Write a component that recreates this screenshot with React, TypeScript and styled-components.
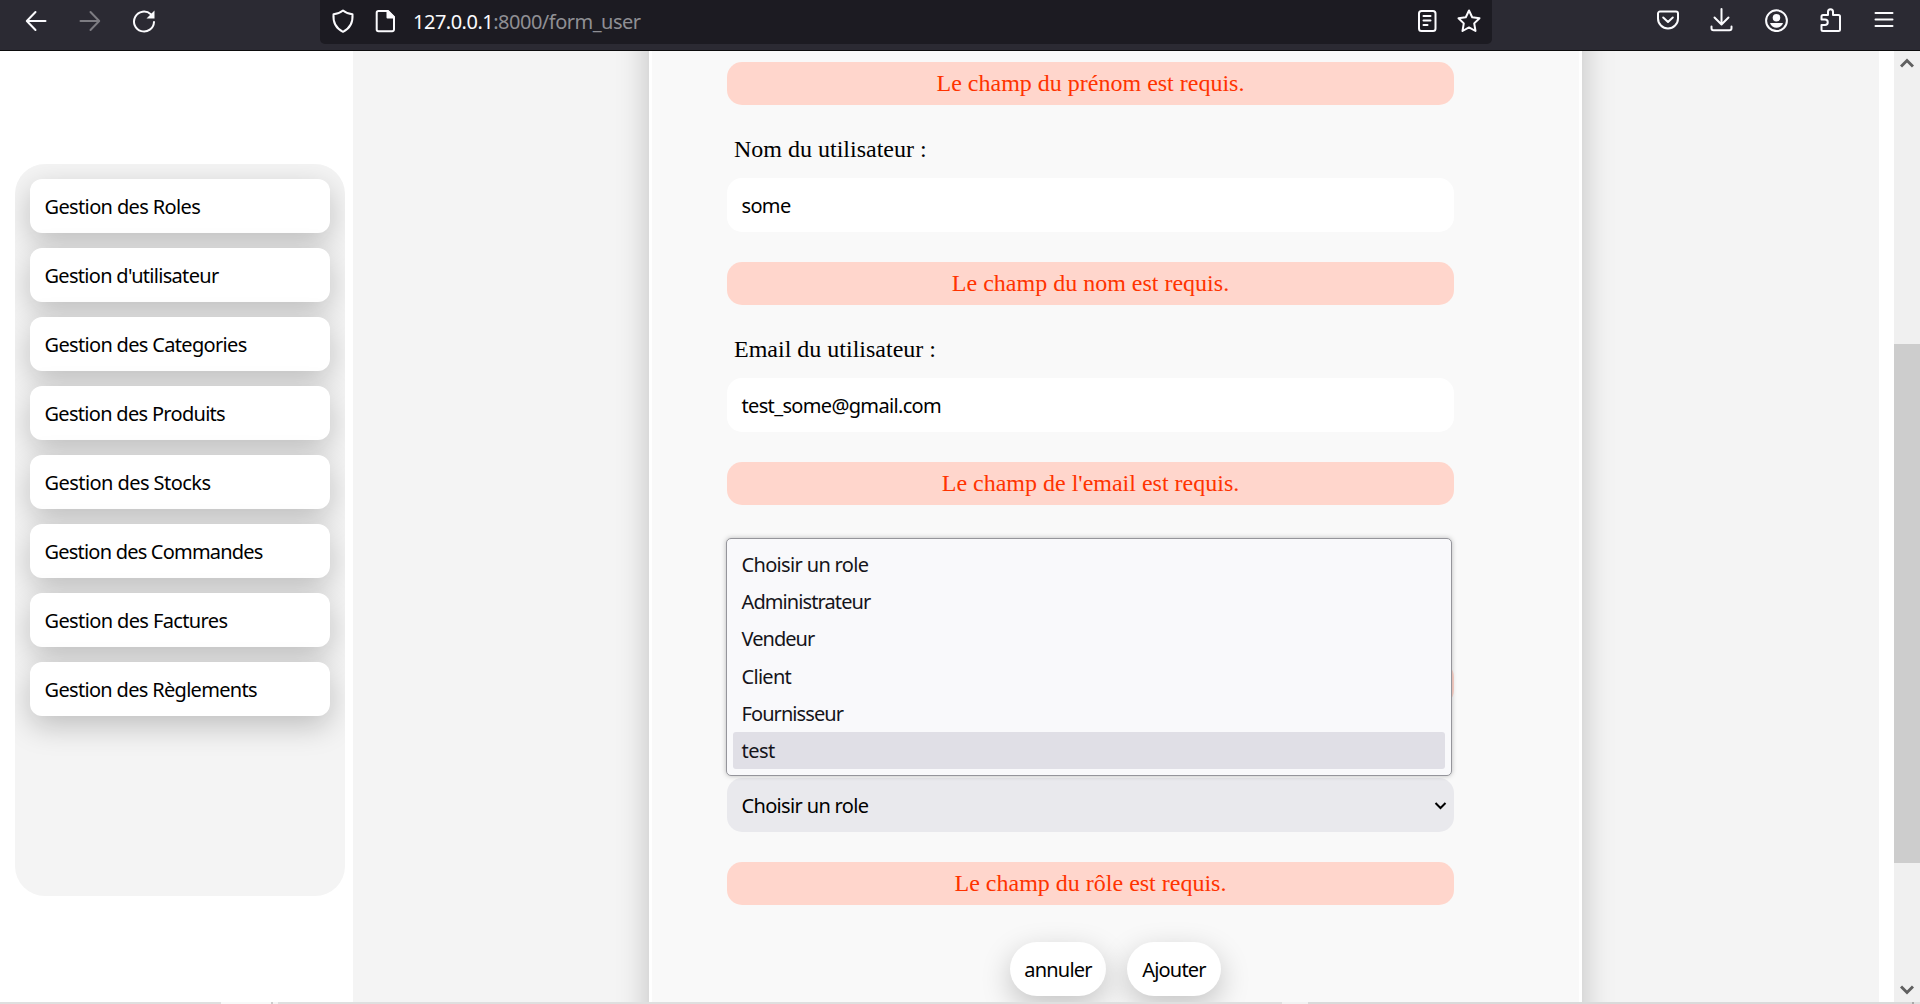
import React from "react";
import styled, { createGlobalStyle } from "styled-components";

const Global = createGlobalStyle`
  * { box-sizing: border-box; }
  html, body { margin: 0; padding: 0; }
  body { overflow: hidden; background: #fff; }
`;

const uiFont = `"Noto Sans", "Open Sans", sans-serif`;
const softShadow = `0 10px 30px rgba(0, 0, 0, 0.22)`;

const Window = styled.div`
  width: 1920px;
  height: 1004px;
  display: flex;
  flex-direction: column;
  overflow: hidden;
  font-family: ${uiFont};
  color: #000;
`;

const Toolbar = styled.header`
  height: 51px;
  flex: none;
  display: flex;
  align-items: flex-start;
  background: #2b2a33;
  border-bottom: 1px solid #0c0c0d;
`;

const NavButtons = styled.nav`
  width: 320px;
  height: 42px;
  padding-left: 24px;
  display: flex;
  align-items: center;
  gap: 30px;
`;

const AddressBar = styled.div`
  width: 1172px;
  height: 44px;
  padding: 0 11px 3px 10px;
  display: flex;
  align-items: center;
  background: #1c1b22;
  border-radius: 0 0 5px 5px;
`;

const Address = styled.span`
  flex: 1;
  margin-left: 16px;
  padding-top: 2px;
  font-size: 20px;
  letter-spacing: -0.5px;
  line-height: 40px;
  color: #8f8f94;
  white-space: nowrap;
`;

const Host = styled.span`
  color: #fbfbfe;
`;

const Tools = styled.div`
  flex: 1;
  height: 40px;
  padding-right: 24px;
  display: flex;
  align-items: center;
  justify-content: flex-end;
  gap: 30px;
`;

const Glyph = styled.svg<{ $gap?: number; $dim?: boolean }>`
  width: 24px;
  height: 24px;
  flex: none;
  margin-left: ${(p) => p.$gap ?? 0}px;
  fill: none;
  stroke: ${(p) => (p.$dim ? "#7d7c82" : "#fbfbfe")};
  stroke-width: 2;
  stroke-linecap: round;
  stroke-linejoin: round;
`;

const Viewport = styled.div`
  height: 951px;
  flex: none;
  display: flex;
  overflow: hidden;
`;

const Sidebar = styled.aside`
  width: 353px;
  padding: 113px 8px 0 15px;
  background: #fff;
`;

const Menu = styled.ul`
  height: 732px;
  margin: 0;
  padding: 15px;
  list-style: none;
  display: flex;
  flex-direction: column;
  gap: 15px;
  overflow: hidden;
  background: #f4f4f4;
  border-radius: 30px;
`;

const MenuItem = styled.li<{ $track: number }>`
  height: 54px;
  padding-left: 14.5px;
  line-height: 55px;
  font-size: 20px;
  letter-spacing: ${(p) => p.$track}px;
  background: #fff;
  border-radius: 12px;
  box-shadow: ${softShadow};
`;

const Main = styled.main`
  width: 1526px;
  padding-left: 296px;
  overflow: hidden;
  background: #f4f4f4;
`;

const Card = styled.div`
  width: 933px;
  height: 1100px;
  margin-top: -60px;
  padding: 71px 125px 0 75px;
  background: #f9f9f9;
  border: 3px solid #fff;
  border-top: 0;
  box-shadow: ${softShadow};
`;

const ErrorBar = styled.p`
  height: 43px;
  margin: 0;
  line-height: 43px;
  text-align: center;
  font-family: "Liberation Serif", serif;
  font-size: 24px;
  color: #ff3300;
  background: #ffd6cc;
  border-radius: 15px;
`;

const Field = styled.div`
  position: relative;
  height: 157px;
  padding-top: 30px;
`;

const Label = styled.label`
  display: block;
  height: 43px;
  padding-left: 7px;
  line-height: 29px;
  font-family: "Liberation Serif", serif;
  font-size: 24px;
`;

const Input = styled.div<{ $select?: boolean }>`
  height: 54px;
  padding: 0 7px 0 14.5px;
  display: flex;
  align-items: center;
  justify-content: space-between;
  font-size: 20px;
  letter-spacing: -0.66px;
  background: ${(p) => (p.$select ? "#e9e9ed" : "#fff")};
  border-radius: 15px;
`;

const Chevron = styled.svg`
  width: 13px;
  height: 9px;
  fill: none;
  stroke: #000;
  stroke-width: 2;
`;

const Options = styled.ul`
  position: absolute;
  left: -1px;
  bottom: 86px;
  width: 726px;
  height: 238px;
  margin: 0;
  padding: 7px 6px 6px;
  list-style: none;
  display: flex;
  flex-direction: column;
  background: #f9f9fb;
  border: 1px solid #95959b;
  border-radius: 5px;
  box-shadow: 0 0 5px rgba(0, 0, 0, 0.25);
`;

const Option = styled.li<{ $track: number; $active?: boolean }>`
  flex: 1;
  padding-left: 8.5px;
  display: flex;
  align-items: center;
  font-size: 20px;
  letter-spacing: ${(p) => p.$track}px;
  color: #15141a;
  background: ${(p) => (p.$active ? "#e0dfe6" : "transparent")};
  border-radius: 3px;
`;

const Actions = styled.div`
  margin: 37px 0 0 283px;
  display: flex;
  gap: 21px;
`;

const Action = styled.button<{ $w: number }>`
  width: ${(p) => p.$w}px;
  height: 54px;
  padding: 0;
  font: 20px ${uiFont};
  letter-spacing: -0.8px;
  color: #000;
  background: #fff;
  border: 0;
  border-radius: 27px;
  box-shadow: ${softShadow};
`;

const Scrollbar = styled.div`
  width: 26px;
  margin-left: 15px;
  display: flex;
  flex-direction: column;
  align-items: center;
  padding: 6px 0;
  background: #f0f0f0;
`;

const Thumb = styled.div`
  width: 26px;
  height: 519px;
  margin: 275px 0 auto;
  background: #cdcdcd;
`;

const ScrollArrow = styled.svg`
  width: 14px;
  height: 12px;
  fill: none;
  stroke: #606060;
  stroke-width: 3;
`;

const Taskline = styled.footer`
  height: 2px;
  display: flex;
  background: #dfdfdf;
`;

const TaskSegment = styled.span<{ $w: number; $c: string }>`
  width: ${(p) => p.$w}px;
  background: ${(p) => p.$c};
`;

const sections = [
  { label: "Gestion des Roles", track: -0.63 },
  { label: "Gestion d'utilisateur", track: -0.7 },
  { label: "Gestion des Categories", track: -0.67 },
  { label: "Gestion des Produits", track: -0.7 },
  { label: "Gestion des Stocks", track: -0.56 },
  { label: "Gestion des Commandes", track: -0.79 },
  { label: "Gestion des Factures", track: -0.62 },
  { label: "Gestion des Règlements", track: -0.68 },
];

const roles = [
  { label: "Choisir un role", track: -0.66 },
  { label: "Administrateur", track: -0.9 },
  { label: "Vendeur", track: -0.95 },
  { label: "Client", track: -0.7 },
  { label: "Fournisseur", track: -0.92 },
  { label: "test", track: -0.5 },
];

export default function App() {
  return (
    <Window>
      <Global />
      <Toolbar>
        <NavButtons>
          <Glyph><path d="M21.500 12H3M11.500 3 2.800 12l8.700 9" /></Glyph>
          <Glyph $dim><path d="M2.500 12H21M12.500 3l8.700 9-8.700 9" /></Glyph>
          <Glyph>
            <path d="M18.800 5.200A10 10 0 1 0 22 13" />
            <path d="M22.500 1.500v8h-8z" fill="#fbfbfe" stroke="none" />
          </Glyph>
        </NavButtons>
        <AddressBar>
          <Glyph $gap={1}><path d="M12 1.500c3 2.500 6 3.500 9.500 3.800C22 12 20 19 12 22.800 4 19 2 12 2.500 5.300 6 5 9 4 12 1.500z" /></Glyph>
          <Glyph $gap={18}>
            <path d="M5.500 2h9.500l6 6v12.500a1.800 1.800 0 0 1-1.800 1.800H5.500a1.800 1.800 0 0 1-1.800-1.800V3.800A1.800 1.800 0 0 1 5.500 2z" />
            <path d="M14.500 2v6.500H21z" fill="#fbfbfe" />
          </Glyph>
          <Address><Host>127.0.0.1</Host>:8000/form_user</Address>
          <Glyph>
            <rect x="4" y="2" width="16.500" height="20" rx="2.500" />
            <path d="M8.500 7h7M8.500 11.500h7M8.500 16h4" />
          </Glyph>
          <Glyph $gap={18}><path d="m12 1.500 3.200 6.700 7.300 1-5.300 5.200 1.300 7.600-6.500-3.600-6.500 3.600 1.300-7.600L1.500 9.200l7.300-1z" /></Glyph>
        </AddressBar>
        <Tools>
          <Glyph>
            <path d="M4 3.500h16a2 2 0 0 1 2 2v5a10 10 0 0 1-20 0v-5a2 2 0 0 1 2-2z" />
            <path d="m7.200 9.500 4.800 4.500 4.800-4.500" />
          </Glyph>
          <Glyph><path d="M11.500 1v15M4.500 9.500l7 7 7-7M1.500 18.500v1.800a2 2 0 0 0 2 2h16a2 2 0 0 0 2-2v-1.800" /></Glyph>
          <Glyph>
            <circle cx="12.500" cy="12.700" r="10.400" />
            <circle cx="12.500" cy="9.700" r="3.800" fill="#fbfbfe" stroke="none" />
            <path d="M6 15h13c-1 3-3.500 4.700-6.500 4.700S7 18 6 15z" fill="#fbfbfe" stroke="none" />
          </Glyph>
          <Glyph><path d="M10 7V3.800a2.500 2.500 0 0 1 5 0V7h5.500A1.500 1.500 0 0 1 22 8.500v13a1.500 1.500 0 0 1-1.500 1.500H5a1.500 1.500 0 0 1-1.500-1.500V17H7a2.500 2.500 0 0 0 0-5.500H3.500v-3A1.500 1.500 0 0 1 5 7z" /></Glyph>
          <Glyph><path d="M3.500 5h17M3.500 11.500h17M3.500 18h17" /></Glyph>
        </Tools>
      </Toolbar>
      <Viewport>
        <Sidebar>
          <Menu>
            {sections.map((s) => <MenuItem key={s.label} $track={s.track}>{s.label}</MenuItem>)}
          </Menu>
        </Sidebar>
        <Main>
          <Card>
            <ErrorBar>Le champ du prénom est requis.</ErrorBar>
            <Field>
              <Label>Nom du utilisateur :</Label>
              <Input>some</Input>
            </Field>
            <ErrorBar>Le champ du nom est requis.</ErrorBar>
            <Field>
              <Label>Email du utilisateur :</Label>
              <Input>test_some@gmail.com</Input>
            </Field>
            <ErrorBar>Le champ de l'email est requis.</ErrorBar>
            <Field />
            <ErrorBar />
            <Field>
              <Label />
              <Input $select>
                Choisir un role
                <Chevron><path d="M1.500 2l5 5 5-5" /></Chevron>
              </Input>
              <Options>
                {roles.map((r) => (
                  <Option key={r.label} $track={r.track} $active={r.label === "test"}>{r.label}</Option>
                ))}
              </Options>
            </Field>
            <ErrorBar>Le champ du rôle est requis.</ErrorBar>
            <Actions>
              <Action $w={96}>annuler</Action>
              <Action $w={94}>Ajouter</Action>
            </Actions>
          </Card>
        </Main>
        <Scrollbar>
          <ScrollArrow><path d="M1 9.500l6-6 6 6" /></ScrollArrow>
          <Thumb />
          <ScrollArrow><path d="M1 2.500l6 6 6-6" /></ScrollArrow>
        </Scrollbar>
      </Viewport>
      <Taskline>
        <TaskSegment $w={221} $c="#dfdfdf" />
        <TaskSegment $w={50} $c="#f8f8f8" />
        <TaskSegment $w={2} $c="#cccccc" />
        <TaskSegment $w={5} $c="#f4f4f4" />
        <TaskSegment $w={1004} $c="#dfdfdf" />
        <TaskSegment $w={26} $c="#f2f2f2" />
        <TaskSegment $w={604} $c="#dadada" />
        <TaskSegment $w={2} $c="#a8a8a8" />
      </Taskline>
    </Window>
  );
}
